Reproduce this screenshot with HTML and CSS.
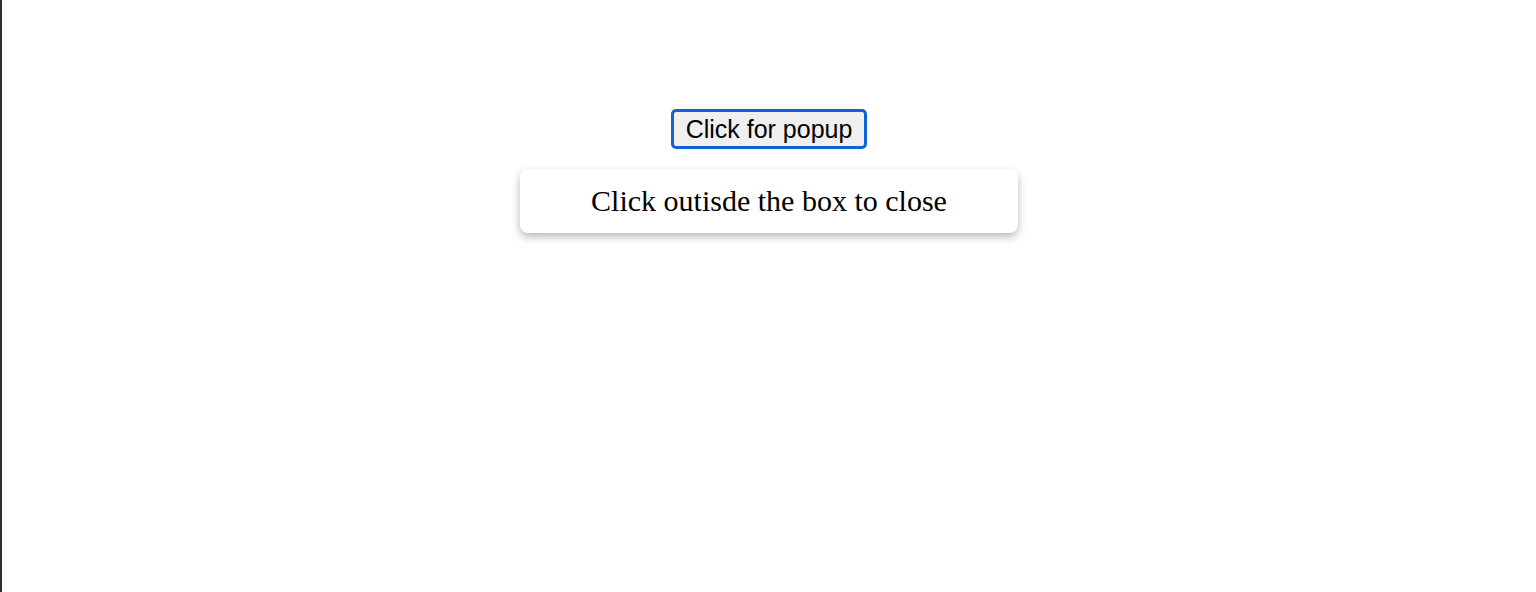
FILE: index.html
```html
<!DOCTYPE html>
<html lang="en">
<head>
  <meta charset="UTF-8">
  <title>Popup Test</title>
  <link rel="stylesheet" href="styles.css">
</head>
<body>

  <div class="stage">
    <button class="open-btn" type="button">Click for popup</button>
    <div class="popup">Click outisde the box to close</div>
  </div>

</body>
</html>
```

FILE: styles.css
```css
html, body {
  margin: 0;
  padding: 0;
  background: #fff;
  height: 100%;
}
body {
  border-left: 2px solid #2e2e2e;
  box-sizing: border-box;
}
.stage {
  display: flex;
  flex-direction: column;
  align-items: center;
  gap: 20px;
  padding-top: 109px;
}
.open-btn {
  box-sizing: border-box;
  width: 196px;
  height: 40px;
  padding: 0;
  font-family: "Liberation Sans", Arial, sans-serif;
  font-size: 25px;
  color: #000;
  background: #efefef;
  border: 3px solid #0f62d4;
  border-radius: 5px;
}
.popup {
  box-sizing: border-box;
  width: 498px;
  height: 64px;
  line-height: 64px;
  text-align: center;
  font-family: "Liberation Serif", "Times New Roman", serif;
  font-size: 30px;
  color: #000;
  background: #fff;
  border-radius: 8px;
  box-shadow: 0 4px 8px rgba(0, 0, 0, 0.28);
}
```
